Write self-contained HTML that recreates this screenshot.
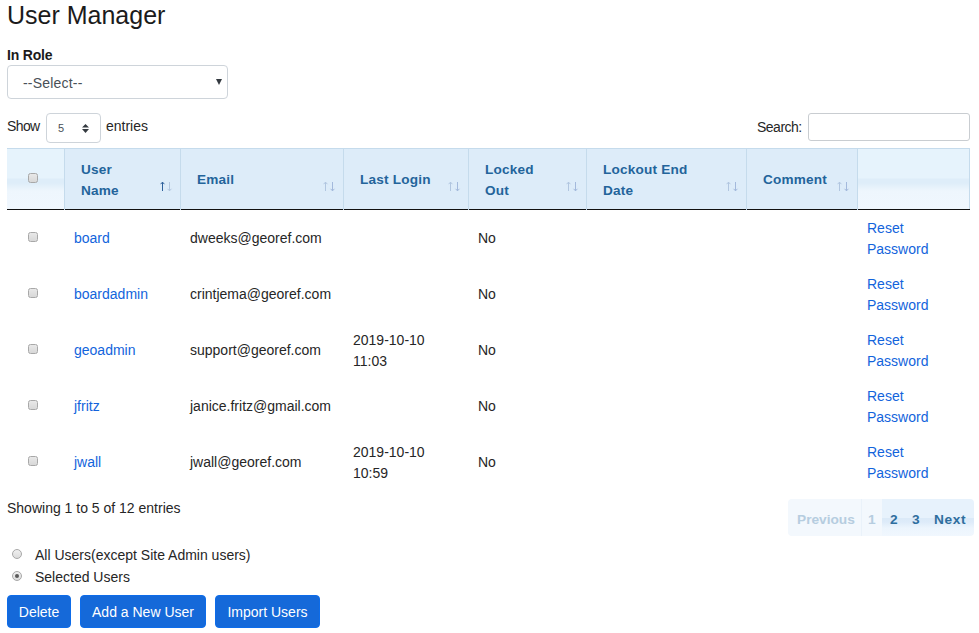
<!DOCTYPE html>
<html><head><meta charset="utf-8">
<style>
*{box-sizing:border-box;margin:0;padding:0}
html,body{width:979px;height:633px;overflow:hidden;background:#fff}
body{font-family:"Liberation Sans",sans-serif;font-size:14px;color:#262626;position:relative}
.a{position:absolute;white-space:nowrap}
h1{position:absolute;left:7px;top:0;font-size:25px;line-height:30px;font-weight:normal;color:#1b1b1b;white-space:nowrap}
.lbl{left:7px;top:45px;font-size:14px;letter-spacing:-0.2px;font-weight:bold;line-height:20px;color:#1b1b1b}
.sel{left:7px;top:65px;width:221px;height:34px;border:1px solid #ced4da;border-radius:4px}
.sel .t{position:absolute;left:15px;top:7px;letter-spacing:0.2px;line-height:20px;color:#495057}
.arr{position:absolute;left:208px;top:13px;width:0;height:0;border-left:3px solid transparent;border-right:3px solid transparent;border-top:6px solid #343a40}
.len{left:46px;top:113px;width:55px;height:30px;border:1px solid #ced4da;border-radius:4px}
.len .v{position:absolute;left:11px;top:7px;font-size:11px;line-height:14px;color:#495057}
.srch{left:808px;top:113px;width:162px;height:28px;border:1px solid #c9cdd1;border-radius:3px}
.hd{position:absolute;top:148px;height:61px;border-top:1px solid #c5dbec;border-right:1px solid #c5dbec;background:#ddecf9;color:#23649b;font-weight:bold;font-size:13.6px;letter-spacing:0.2px}
.hd.g{background:linear-gradient(#e6f3fc 0,#e6f3fc 29px,#deedf9 30px,#deedf9 34px,#eef6fd 42px,#f0f7fe 100%)}
.hd .ht{position:absolute;line-height:21px}
.sa{position:absolute}
.hline{position:absolute;left:7px;top:209px;width:963px;height:1px;background:#111}
.cb{position:absolute;width:10px;height:10px;border:1px solid #a8a8a8;border-radius:2.5px;background:linear-gradient(#e8e8e8,#d8d8d8)}
.lnk{color:#1264dc}
.r{position:absolute;line-height:21px;white-space:nowrap}
.btn{position:absolute;top:595px;height:33px;background:#1569d9;border:1px solid #0d6cea;border-radius:4px;color:#fff;line-height:33px;text-align:center}
.rad{position:absolute;width:10px;height:10px;border:1px solid #a8a8a8;border-radius:50%;background:linear-gradient(#f0f0f0,#dcdcdc)}
.pg{position:absolute;top:499px;height:37px;font-weight:bold;font-size:13.7px;line-height:41px}
</style></head><body>
<h1>User Manager</h1>
<div class="a lbl">In Role</div>
<div class="a sel"><span class="t">--Select--</span><span class="arr"></span></div>

<div class="a" style="left:7px;top:116px;line-height:20px;letter-spacing:-0.6px">Show</div>
<div class="a len"><span class="v">5</span><svg style="position:absolute;left:35px;top:10px" width="8" height="10" viewBox="0 0 8 10"><path d="M0 3.5L3.5 0L7 3.5Z M0 5L3.5 9L7 5Z" fill="#343a40"/></svg></div>
<div class="a" style="left:106px;top:116px;line-height:20px">entries</div>
<div class="a" style="left:757px;top:117px;line-height:20px;letter-spacing:-0.5px">Search:</div>
<div class="a srch"></div>

<div class="hd g" style="left:7px;width:58px"><div class="cb" style="left:21px;top:24px"></div></div>
<div class="hd" style="left:65px;width:116px"><div class="ht" style="left:16px;top:10px">User<br>Name</div></div>
<svg class="sa" style="left:160px;top:181px" width="14" height="11" viewBox="0 0 14 11"><path d="M2.5 10V1.2M0.6 3.2L2.5 1.1L4.4 3.2" stroke="#2f619c" fill="none" stroke-width="1"/><path d="M9.5 1V9.8M7.6 7.8L9.5 9.9L11.4 7.8" stroke="#b3c7e0" fill="none" stroke-width="1"/></svg>
<div class="hd" style="left:181px;width:163px"><div class="ht" style="left:16px;top:20px">Email</div></div>
<svg class="sa" style="left:323px;top:181px" width="14" height="11" viewBox="0 0 14 11"><path d="M2.5 10V1.2M0.6 3.2L2.5 1.1L4.4 3.2" stroke="#b1c6e0" fill="none" stroke-width="1"/><path d="M9.5 1V9.8M7.6 7.8L9.5 9.9L11.4 7.8" stroke="#a3b9dc" fill="none" stroke-width="1"/></svg>
<div class="hd" style="left:344px;width:125px"><div class="ht" style="left:16px;top:20px">Last Login</div></div>
<svg class="sa" style="left:448px;top:181px" width="14" height="11" viewBox="0 0 14 11"><path d="M2.5 10V1.2M0.6 3.2L2.5 1.1L4.4 3.2" stroke="#b1c6e0" fill="none" stroke-width="1"/><path d="M9.5 1V9.8M7.6 7.8L9.5 9.9L11.4 7.8" stroke="#a3b9dc" fill="none" stroke-width="1"/></svg>
<div class="hd" style="left:469px;width:118px"><div class="ht" style="left:16px;top:10px">Locked<br>Out</div></div>
<svg class="sa" style="left:566px;top:181px" width="14" height="11" viewBox="0 0 14 11"><path d="M2.5 10V1.2M0.6 3.2L2.5 1.1L4.4 3.2" stroke="#b1c6e0" fill="none" stroke-width="1"/><path d="M9.5 1V9.8M7.6 7.8L9.5 9.9L11.4 7.8" stroke="#a3b9dc" fill="none" stroke-width="1"/></svg>
<div class="hd" style="left:587px;width:160px"><div class="ht" style="left:16px;top:10px">Lockout End<br>Date</div></div>
<svg class="sa" style="left:726px;top:181px" width="14" height="11" viewBox="0 0 14 11"><path d="M2.5 10V1.2M0.6 3.2L2.5 1.1L4.4 3.2" stroke="#b1c6e0" fill="none" stroke-width="1"/><path d="M9.5 1V9.8M7.6 7.8L9.5 9.9L11.4 7.8" stroke="#a3b9dc" fill="none" stroke-width="1"/></svg>
<div class="hd" style="left:747px;width:111px"><div class="ht" style="left:16px;top:20px">Comment</div></div>
<svg class="sa" style="left:837px;top:181px" width="14" height="11" viewBox="0 0 14 11"><path d="M2.5 10V1.2M0.6 3.2L2.5 1.1L4.4 3.2" stroke="#b1c6e0" fill="none" stroke-width="1"/><path d="M9.5 1V9.8M7.6 7.8L9.5 9.9L11.4 7.8" stroke="#a3b9dc" fill="none" stroke-width="1"/></svg>
<div class="hd g" style="left:858px;width:112px"></div>
<div class="hline"></div><div style="position:absolute;left:64px;top:209px;width:1px;height:1px;background:#c0d6e8"></div><div style="position:absolute;left:180px;top:209px;width:1px;height:1px;background:#c0d6e8"></div><div style="position:absolute;left:343px;top:209px;width:1px;height:1px;background:#c0d6e8"></div><div style="position:absolute;left:468px;top:209px;width:1px;height:1px;background:#c0d6e8"></div><div style="position:absolute;left:586px;top:209px;width:1px;height:1px;background:#c0d6e8"></div><div style="position:absolute;left:746px;top:209px;width:1px;height:1px;background:#c0d6e8"></div><div style="position:absolute;left:857px;top:209px;width:1px;height:1px;background:#c0d6e8"></div>

<div class="cb" style="left:28px;top:232px"></div>
<div class="r lnk" style="left:74px;top:228px">board</div>
<div class="r" style="left:190px;top:228px">dweeks@georef.com</div>
<div class="r" style="left:478px;top:228px">No</div>
<div class="r lnk" style="left:867px;top:218px">Reset<br>Password</div>
<div class="cb" style="left:28px;top:288px"></div>
<div class="r lnk" style="left:74px;top:284px">boardadmin</div>
<div class="r" style="left:190px;top:284px">crintjema@georef.com</div>
<div class="r" style="left:478px;top:284px">No</div>
<div class="r lnk" style="left:867px;top:274px">Reset<br>Password</div>
<div class="cb" style="left:28px;top:344px"></div>
<div class="r lnk" style="left:74px;top:340px">geoadmin</div>
<div class="r" style="left:190px;top:340px">support@georef.com</div>
<div class="r" style="left:353px;top:330px">2019-10-10<br>11:03</div>
<div class="r" style="left:478px;top:340px">No</div>
<div class="r lnk" style="left:867px;top:330px">Reset<br>Password</div>
<div class="cb" style="left:28px;top:400px"></div>
<div class="r lnk" style="left:74px;top:396px">jfritz</div>
<div class="r" style="left:190px;top:396px">janice.fritz@gmail.com</div>
<div class="r" style="left:478px;top:396px">No</div>
<div class="r lnk" style="left:867px;top:386px">Reset<br>Password</div>
<div class="cb" style="left:28px;top:456px"></div>
<div class="r lnk" style="left:74px;top:452px">jwall</div>
<div class="r" style="left:190px;top:452px">jwall@georef.com</div>
<div class="r" style="left:353px;top:442px">2019-10-10<br>10:59</div>
<div class="r" style="left:478px;top:452px">No</div>
<div class="r lnk" style="left:867px;top:442px">Reset<br>Password</div>

<div class="a" style="left:7px;top:498px;line-height:20px">Showing 1 to 5 of 12 entries</div>
<div class="pg" style="left:788px;width:73px;background:#f3f8fd;color:#b6cde0;border-radius:4px 0 0 4px;padding-left:9px">Previous</div>
<div class="pg" style="left:861px;width:21px;background:#f3f8fd;color:#b6cde0;border-left:1px solid #eaf2fa;padding-left:6px">1</div>
<div class="pg" style="left:882px;width:92px;background:linear-gradient(#e7f2fc 0,#e7f2fc 19px,#dbeaf8 19.5px,#ddebf9 23px,#ecf5fd 29px,#f0f7fe 100%);color:#2e6e9e;border-radius:0 4px 4px 0"><span style="position:absolute;left:8px">2</span><span style="position:absolute;left:30px">3</span><span style="position:absolute;left:52px;letter-spacing:0.6px">Next</span></div>

<div class="rad" style="left:12px;top:549px"></div>
<div class="a" style="left:35px;top:545px;line-height:20px">All Users(except Site Admin users)</div>
<div class="rad" style="left:12px;top:571px"><div style="position:absolute;left:2px;top:2px;width:4px;height:4px;border-radius:50%;background:#5a5a5a"></div></div>
<div class="a" style="left:35px;top:567px;line-height:20px">Selected Users</div>

<div class="btn" style="left:7px;width:64px">Delete</div>
<div class="btn" style="left:80px;width:126px">Add a New User</div>
<div class="btn" style="left:215px;width:105px">Import Users</div>
</body></html>
